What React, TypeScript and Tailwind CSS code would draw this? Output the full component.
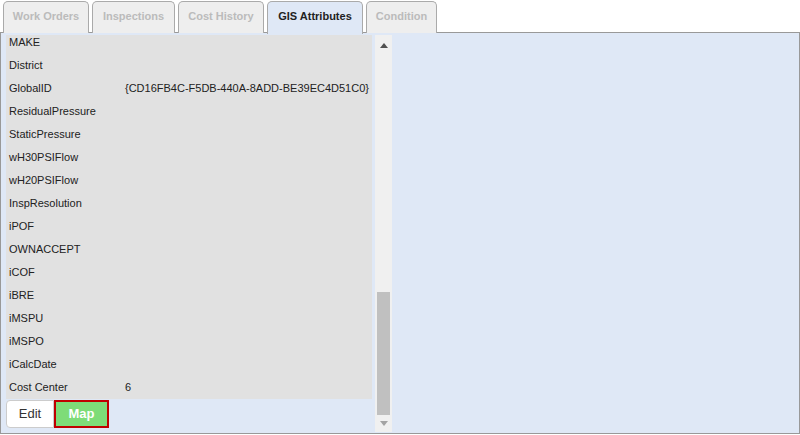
import React from "react";

const rows: [string, string][] = [
  ["MAKE", ""],
  ["District", ""],
  ["GlobalID", "{CD16FB4C-F5DB-440A-8ADD-BE39EC4D51C0}"],
  ["ResidualPressure", ""],
  ["StaticPressure", ""],
  ["wH30PSIFlow", ""],
  ["wH20PSIFlow", ""],
  ["InspResolution", ""],
  ["iPOF", ""],
  ["OWNACCEPT", ""],
  ["iCOF", ""],
  ["iBRE", ""],
  ["iMSPU", ""],
  ["iMSPO", ""],
  ["iCalcDate", ""],
  ["Cost Center", "6"],
];

export default function App() {
  return (
    <div
      className="w-[800px] h-[435px] bg-white relative overflow-hidden"
      style={{ fontFamily: '"Liberation Sans", Arial, sans-serif' }}
    >
      <div className="flex h-[33px] pl-[3px] pt-[1px] gap-[3px] relative z-10">
        <div className="w-[86px] h-[32px] bg-[#eeeeee] border border-b-0 border-[#aaaaaa] rounded-t-[5px] flex items-center justify-center text-[11px] font-bold text-[#bbbbbb] pb-[2px]">
          Work Orders
        </div>
        <div className="w-[83px] h-[32px] bg-[#eeeeee] border border-b-0 border-[#aaaaaa] rounded-t-[5px] flex items-center justify-center text-[11px] font-bold text-[#bbbbbb] pb-[2px]">
          Inspections
        </div>
        <div className="w-[86px] h-[32px] bg-[#eeeeee] border border-b-0 border-[#aaaaaa] rounded-t-[5px] flex items-center justify-center text-[11px] font-bold text-[#bbbbbb] pb-[2px]">
          Cost History
        </div>
        <div className="w-[96px] h-[33px] bg-[#dfe8f6] border border-b-0 border-[#aaaaaa] rounded-t-[5px] flex items-center justify-center text-[11px] font-bold text-[#222222] pb-[3px]">
          GIS Attributes
        </div>
        <div className="w-[71px] h-[32px] bg-[#eeeeee] border border-b-0 border-[#aaaaaa] rounded-t-[5px] flex items-center justify-center text-[11px] font-bold text-[#bbbbbb] pb-[2px]">
          Condition
        </div>
      </div>
      <div className="absolute left-0 top-[32px] w-[800px] h-[402px] border border-[#999999] bg-[#dfe8f6] pl-[5px] pt-[2px] flex">
        <div className="flex flex-col w-[366px]">
          <div className="h-[364px] bg-[#e1e1e1] overflow-hidden">
            <div className="mt-[-4px]">
              {rows.map(([k, v]) => (
                <div key={k} className="h-[23px] flex items-center text-[11px] text-[#222222]">
                  <div className="w-[119px] pl-[3px]">{k}</div>
                  <div>{v}</div>
                </div>
              ))}
            </div>
          </div>
          <div className="flex mt-[1px]">
            <button className="w-[48px] h-[28px] bg-white border border-[#cccccc] rounded-l-[4px] text-[13px] text-[#333333]">
              Edit
            </button>
            <button className="w-[55px] h-[28px] bg-[#7edc78] border-2 border-[#c00000] text-[13px] font-bold text-white">
              Map
            </button>
          </div>
        </div>
        <div className="ml-[3px] w-[17px] h-[397px] bg-[#f0f0f0] flex flex-col items-center">
          <div className="h-[20px] flex items-center justify-center pt-[1px]">
            <svg width="8" height="5" viewBox="0 0 8 5">
              <path d="M4 0 L8 5 L0 5 Z" fill="#505050" />
            </svg>
          </div>
          <div className="flex-1" />
          <div className="w-[13px] h-[123px] bg-[#c0c0c0]" />
          <div className="h-[17px] flex items-center justify-center">
            <svg width="8" height="5" viewBox="0 0 8 5">
              <path d="M0 0 L8 0 L4 5 Z" fill="#a3a3a3" />
            </svg>
          </div>
        </div>
      </div>
    </div>
  );
}
